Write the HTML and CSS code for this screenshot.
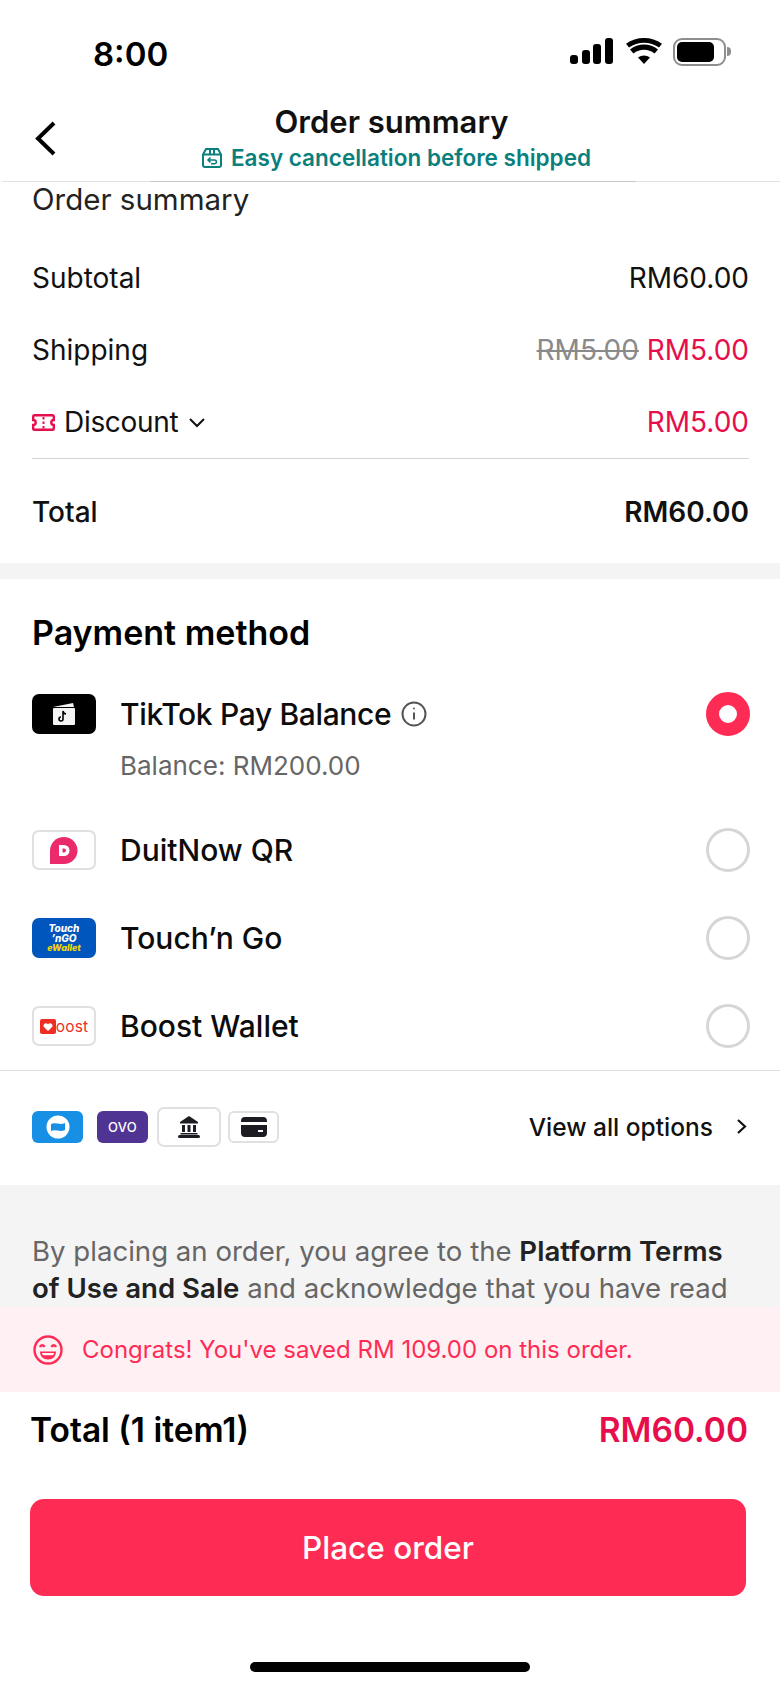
FILE: index.html
```html
<!DOCTYPE html>
<html lang="en">
<head>
    <meta charset="UTF-8">
    <meta name="viewport" content="width=device-width, initial-scale=1.0">
    <title>Order summary</title>
    <link rel="stylesheet" href="styles.css">
</head>
<body>
<div class="phone">
    <div class="status-bar">
        <span class="clock">8:00</span>
        <div class="status-icons">
            <svg class="signal" width="43" height="26" viewBox="0 0 43 26"><rect x="0" y="17" width="8" height="9" rx="3"/><rect x="12" y="12" width="8" height="14" rx="3"/><rect x="23" y="6" width="8" height="20" rx="3"/><rect x="35" y="0" width="8" height="26" rx="3"/></svg>
            <svg class="wifi" width="36" height="26" viewBox="0 0 36 26"><path d="M18 26l-6-6.500c3.500-2.800 8.500-2.800 12 0z"/><path d="M7.500 15.500l-3.500-4c8-6.700 20-6.700 28 0l-3.500 4c-6-5-15-5-21 0z"/><path d="M3 9.500l-3-3.800c10.300-7.600 25.700-7.600 36 0l-3 3.800c-8.800-6.400-21.200-6.400-30 0z"/></svg>
            <div class="battery"><div class="battery-fill"></div></div>
            <div class="battery-nub"></div>
        </div>
    </div>

    <header class="top-nav">
        <svg class="back" width="23" height="35" viewBox="0 0 23 35"><path d="M20 2L4 17.500 20 33" fill="none" stroke="#000" stroke-width="4"/></svg>
        <div class="top-title">
            <h1>Order summary</h1>
            <p class="top-sub">
                <svg width="20" height="20" viewBox="0 0 20 20" fill="none" stroke="#0a807c" stroke-width="2"><path d="M1 6.500L4 1h12l3 5.500V17a2 2 0 0 1-2 2H3a2 2 0 0 1-2-2z"/><path d="M1 6.500h18M8 1v5.500M12 1v5.500"/><path d="M8.500 9.500L6 12l2.500 2.500M6 12h6.500a1.800 1.800 0 0 1 0 3.800H9" stroke-width="1.600"/></svg>
                Easy cancellation before shipped
            </p>
        </div>
    </header>

    <section class="summary">
        <h2 class="summary-title">Order summary</h2>
        <div class="row"><span>Subtotal</span><span>RM60.00</span></div>
        <div class="row"><span>Shipping</span><span><s class="old-price">RM5.00</s> <span class="red">RM5.00</span></span></div>
        <div class="row">
            <span class="discount">
                <svg width="23" height="17" viewBox="0 0 23 17" fill="none" stroke="#e60e4d" stroke-width="2.400"><path d="M2.500 1.200h18a1.300 1.300 0 0 1 1.300 1.300v3.500a2.500 2.500 0 0 0 0 5v3.500a1.300 1.300 0 0 1-1.300 1.300h-18a1.300 1.300 0 0 1-1.300-1.300V11a2.500 2.500 0 0 0 0-5V2.500a1.300 1.300 0 0 1 1.300-1.300z"/><path d="M11.500 3v2.500M11.500 7.500v2.500M11.500 12v2.500" stroke-width="2"/></svg>
                Discount
                <svg class="caret" width="18" height="11" viewBox="0 0 18 11"><path d="M2 2l7 7 7-7" fill="none" stroke="#111" stroke-width="2"/></svg>
            </span>
            <span class="red">RM5.00</span>
        </div>
        <div class="row total-row"><span>Total</span><strong>RM60.00</strong></div>
    </section>

    <section class="payment">
        <h2 class="payment-title">Payment method</h2>

        <div class="method method-first">
            <div class="logo logo-black">
                <svg width="26" height="24" viewBox="0 0 26 24"><path d="M2 5L22 1l1 4z" fill="#f4f4f4"/><rect x="2" y="6" width="22" height="17" rx="1" fill="#f4f4f4"/><path d="M12 9v8a2 2 0 1 1-2-2M12 9c.3 1.800 1.400 2.800 3 3" fill="none" stroke="#000" stroke-width="1.600"/></svg>
            </div>
            <div class="method-name">TikTok Pay Balance
                <svg class="info" width="26" height="26" viewBox="0 0 26 26" fill="none" stroke="#555" stroke-width="2"><circle cx="13" cy="13" r="11.500"/><path d="M13 11.500v7"/><circle cx="13" cy="7.500" r="1" fill="#555" stroke="none"/></svg>
            </div>
            <div class="radio radio-on"></div>
        </div>
        <p class="balance">Balance: RM200.00</p>

        <div class="method method-duit">
            <div class="logo logo-line">
                <svg width="28" height="27" viewBox="0 0 28 27"><path d="M14 0a13.500 13.500 0 0 1 0 27H0V14C0 6 6 0 14 0z" fill="#ea2a6a"/><path d="M9 8h5a5.500 5.500 0 0 1 0 11H9z" fill="#fff"/><path d="M12.500 11.500h1.500a2 2 0 0 1 0 4h-1.500z" fill="#ea2a6a"/></svg>
            </div>
            <div class="method-name">DuitNow QR</div>
            <div class="radio"></div>
        </div>

        <div class="method">
            <div class="logo logo-tng">
                <span class="tng-top">Touch</span>
                <span class="tng-mid">’nGO</span>
                <span class="tng-low">eWallet</span>
            </div>
            <div class="method-name">Touch’n Go</div>
            <div class="radio"></div>
        </div>

        <div class="method">
            <div class="logo logo-line logo-boost">
                <svg width="16" height="15" viewBox="0 0 16 15"><rect width="16" height="15" rx="2" fill="#ee2e24"/><path d="M8 12L3.500 7.500a2.500 2.500 0 0 1 4.500-2 2.500 2.500 0 0 1 4.500 2z" fill="#fff"/></svg><span>oost</span>
            </div>
            <div class="method-name">Boost Wallet</div>
            <div class="radio"></div>
        </div>

        <div class="more-options">
            <div class="mini-logos">
                <div class="mini mini-blue">
                    <svg width="24" height="24" viewBox="0 0 24 24"><circle cx="12" cy="12" r="11.500" fill="#fff"/><path d="M5 9c5-2 9 1.500 14-1v7c-5 2.500-9-1-14 1z" fill="#168fe4"/></svg>
                </div>
                <div class="mini mini-ovo">OVO</div>
                <div class="mini-bank">
                    <svg width="22" height="22" viewBox="0 0 22 22" fill="#1c1c22"><path d="M11 0l9 6v1.500H2V6z"/><rect x="4" y="9" width="3" height="7"/><rect x="9.500" y="9" width="3" height="7"/><rect x="15" y="9" width="3" height="7"/><rect x="2.500" y="17" width="17" height="1.500"/><rect x="0" y="19" width="22" height="3" rx="1.500"/></svg>
                </div>
                <div class="mini mini-card">
                    <svg width="26" height="20" viewBox="0 0 26 20"><path d="M0 4a4 4 0 0 1 4-4h18a4 4 0 0 1 4 4v1H0zM0 8h26v8a4 4 0 0 1-4 4H4a4 4 0 0 1-4-4z" fill="#1c1c22"/><rect x="17" y="13" width="5" height="2" fill="#fff"/></svg>
                </div>
            </div>
            <div class="view-all">View all options
                <svg width="12" height="17" viewBox="0 0 12 17"><path d="M2 2l7 6.500L2 15" fill="none" stroke="#111" stroke-width="2.200"/></svg>
            </div>
        </div>
    </section>

    <section class="terms">
        <p>By placing an order, you agree to the <b>Platform Terms of Use and Sale</b> and acknowledge that you have read</p>
    </section>

    <div class="savings">
        <svg width="30" height="30" viewBox="0 0 30 30" fill="none" stroke="#fe2c55" stroke-width="2.400"><circle cx="15" cy="15" r="13.500"/><path d="M7 12c.8-2.400 3.700-2.400 4.500 0M18.500 12c.8-2.400 3.700-2.400 4.500 0"/><path d="M7 16.500h16c0 5-3.500 8-8 8s-8-3-8-8z" fill="#fe2c55" stroke="none"/><path d="M9 18h12c-.2 1-.5 1.600-1 2.200H10c-.5-.6-.8-1.200-1-2.200z" fill="#fff" stroke="none"/></svg>
        <span>Congrats! You've saved RM 109.00 on this order.</span>
    </div>

    <div class="checkout">
        <div class="checkout-total"><span>Total (1 item1)</span><span class="checkout-price">RM60.00</span></div>
        <button class="place-order">Place order</button>
    </div>

    <div class="home-bar"></div>
</div>
</body>
</html>
```
FILE: styles.css
```css
* {
    box-sizing: border-box;
}

body {
    margin: 0;
    background: #fff;
    font-family: Inter, "Liberation Sans", sans-serif;
    color: #111;
}

h1, h2, p {
    margin: 0;
}

.phone {
    width: 780px;
    height: 1688px;
    overflow: hidden;
}

/* status bar */
.status-bar {
    height: 94px;
    display: flex;
    justify-content: space-between;
    padding: 38px 49px 0 93px;
}

.clock {
    font-size: 33px;
    font-weight: 600;
    line-height: 32px;
    color: #000;
}

.status-icons {
    display: flex;
    align-items: flex-start;
}

.signal {
    margin-right: 13px;
}

.wifi {
    margin-right: 11px;
}

.battery {
    width: 53px;
    height: 28px;
    border: 2.5px solid #8e8e8e;
    border-radius: 9px;
    padding: 2px;
}

.battery-fill {
    width: 37px;
    height: 100%;
    background: #000;
    border-radius: 5px;
}

.battery-nub {
    width: 4px;
    height: 9px;
    margin: 9px 0 0 1px;
    background: #8e8e8e;
    border-radius: 0 4px 4px 0;
}

/* nav */
.top-nav {
    height: 88px;
    position: relative;
    margin-left: 2px;
    border-bottom: 1px solid #e2e2e2;
    text-align: center;
}

.top-nav::after {
    content: "";
    position: absolute;
    left: 148px;
    bottom: -1px;
    width: 486px;
    height: 1px;
    background: #c8c8c8;
}

.back {
    position: absolute;
    left: 32px;
    top: 27px;
}

.top-title {
    padding-left: 1px;
}

.top-title h1 {
    font-size: 31px;
    font-weight: 600;
    line-height: 40px;
    color: #111;
    padding-top: 8px;
}

.top-sub {
    display: flex;
    align-items: center;
    justify-content: center;
    gap: 9px;
    margin-top: 1px;
    padding-left: 10px;
    font-size: 22.5px;
    font-weight: 600;
    line-height: 30px;
    color: #0a807c;
}

/* order summary */
.summary {
    padding: 0 31px 0 32px;
    height: 397px;
    border-bottom: 16px solid #f4f4f4;
}

.summary-title {
    font-size: 29.5px;
    font-weight: 400;
    line-height: 35px;
    margin-bottom: 25px;
    color: #222;
}

.row {
    display: flex;
    justify-content: space-between;
    align-items: center;
    height: 72px;
    font-size: 28px;
}

.red {
    color: #e60e4d;
}

.old-price {
    color: #8a8a8a;
}

.discount {
    display: flex;
    align-items: center;
    gap: 9px;
    letter-spacing: -.3px;
}

.caret {
    margin-left: 1px;
}

.total-row {
    border-top: 1px solid #d4d4d4;
    height: 106px;
    font-weight: 500;
}

.total-row strong {
    font-weight: 600;
}

/* payment */
.payment-title {
    padding: 0 32px;
    font-size: 34px;
    font-weight: 600;
    line-height: 40px;
    margin-top: 34px;
    color: #000;
}

.method {
    display: flex;
    align-items: center;
    height: 40px;
    margin-top: 48px;
    padding: 0 30px 0 32px;
}

.method-first {
    margin-top: 41px;
}

.method-first .method-name {
    letter-spacing: -.35px;
}

.method-duit {
    margin-top: 47px;
}

.logo {
    width: 64px;
    height: 40px;
    border-radius: 7px;
    flex-shrink: 0;
    display: flex;
    align-items: center;
    justify-content: center;
}

.logo-black {
    background: #000;
}

.logo-line {
    border: 2px solid #e0e0e0;
}

.logo-boost {
    color: #ee2e24;
    font-size: 15.5px;
    font-weight: 400;
    letter-spacing: .2px;
}

.logo-tng {
    flex-direction: column;
    background: #0056bd;
    color: #fff;
    font-style: italic;
    font-weight: 800;
    line-height: 10px;
}

.tng-top {
    font-size: 10px;
}

.tng-mid {
    font-size: 10px;
}

.tng-low {
    font-size: 9px;
    color: #f5d800;
}

.method-name {
    flex: 1;
    display: flex;
    align-items: center;
    gap: 10px;
    margin-left: 24px;
    font-size: 30px;
    font-weight: 500;
    color: #0c0c0c;
}

.radio {
    width: 44px;
    height: 44px;
    border: 3px solid #d6d6d6;
    border-radius: 50%;
    flex-shrink: 0;
}

.radio-on {
    border: 13px solid #fe2c55;
}

.balance {
    margin: 15px 0 0 120px;
    font-size: 26px;
    line-height: 34px;
    color: #666;
}

.more-options {
    display: flex;
    justify-content: space-between;
    align-items: center;
    margin-top: 24px;
    height: 115px;
    padding: 0 32px 3px 32px;
    border-top: 1px solid #e0e0e0;
}

.mini-logos {
    display: flex;
    align-items: center;
}

.mini {
    width: 51px;
    height: 32px;
    border-radius: 6px;
    display: flex;
    align-items: center;
    justify-content: center;
}

.mini-blue {
    background: #168fe4;
    margin-right: 14px;
}

.mini-ovo {
    background: #4f3494;
    color: #fff;
    font-size: 13px;
    font-weight: 500;
    letter-spacing: .3px;
    margin-right: 9px;
}

.mini-bank {
    width: 64px;
    height: 40px;
    border: 2px solid #e0e0e0;
    border-radius: 7px;
    display: flex;
    align-items: center;
    justify-content: center;
    margin-right: 7px;
}

.mini-card {
    border: 2px solid #e0e0e0;
}

.view-all {
    display: flex;
    align-items: center;
    gap: 23px;
    font-size: 24.5px;
    font-weight: 500;
    color: #111;
}

/* terms + bottom bar */
.terms {
    height: 122px;
    background: #f4f4f4;
    padding: 48px 32px 0 32px;
    overflow: hidden;
}

.terms p {
    font-size: 27.6px;
    line-height: 37px;
    color: #666;
}

.terms b {
    font-weight: 600;
    color: #222;
}

.savings {
    height: 85px;
    background: #fff0f3;
    display: flex;
    align-items: center;
    gap: 19px;
    padding-left: 33px;
    font-size: 24px;
    color: #fe2c55;
}

.checkout {
    padding: 0 32px 0 30px;
}

.checkout-total {
    display: flex;
    justify-content: space-between;
    align-items: center;
    height: 76px;
    font-size: 33.5px;
    font-weight: 600;
    color: #000;
}

.checkout-price {
    color: #e60e4d;
}

.place-order {
    display: block;
    width: 716px;
    height: 97px;
    margin-top: 31px;
    border: 0;
    border-radius: 14px;
    background: #fe2c55;
    color: #fff;
    font-family: inherit;
    font-size: 31.5px;
    font-weight: 500;
}

.home-bar {
    width: 280px;
    height: 10px;
    margin: 66px auto 0 auto;
    background: #000;
    border-radius: 5px;
}
```
